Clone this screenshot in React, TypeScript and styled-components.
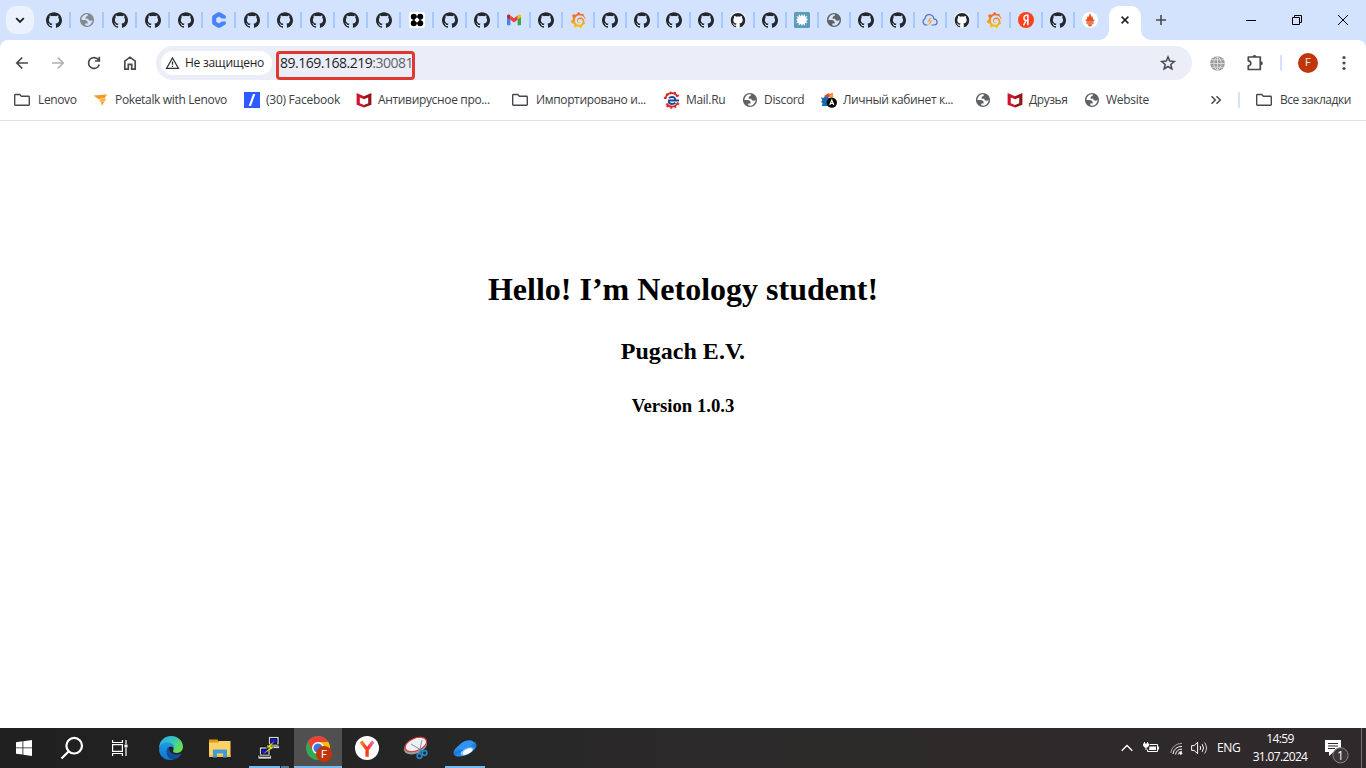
import React from "react";
import styled, { createGlobalStyle, css } from "styled-components";
import { SiGithub, SiGrafana } from "react-icons/si";

const GlobalStyle = createGlobalStyle`
  html, body { margin: 0; padding: 0; }
  body {
    width: 1366px; height: 768px; overflow: hidden; background: #fff;
    font-family: "Open Sans", "Noto Sans", sans-serif;
  }
  svg { display: block; flex: none; overflow: visible; }
`;

const Screen = styled.div`
  display: flex; flex-direction: column; width: 1366px; height: 768px;
`;

/* ---------- tab strip ---------- */
const TabStrip = styled.div`
  display: flex; align-items: center; height: 40px; background: #d3e2fd;
`;
const TabSearch = styled.div`
  display: flex; align-items: center; justify-content: center;
  width: 28px; height: 28px; margin: 0 3px 0 6px; border-radius: 10px; background: #ebf2fe;
`;
const Tab = styled.div<{ $w: number; $last?: boolean }>`
  box-sizing: border-box; display: flex; align-items: center; justify-content: center;
  width: ${p => p.$w}px; height: 16px; padding-left: ${p => (p.$w > 32 ? 1 : 0)}px;
  border-right: 2px solid ${p => (p.$last ? "transparent" : "#a8c7fa")};
`;
const ActiveTab = styled.div`
  position: relative; display: flex; align-items: center; justify-content: center;
  width: 32px; height: 34px; margin: 6px 0 0 2px; border-radius: 10px 10px 0 0; background: #fff;
  padding-bottom: 6px; box-sizing: border-box;
  &::before, &::after {
    content: ""; position: absolute; bottom: 0; width: 10px; height: 10px;
  }
  &::before { left: -10px; background: radial-gradient(circle at 0 0, transparent 9.5px, #fff 10.2px); }
  &::after { right: -10px; background: radial-gradient(circle at 100% 0, transparent 9.5px, #fff 10.2px); }
`;
const NewTab = styled.div`
  display: flex; width: 12px; margin-left: 14px;
`;
const WindowButtons = styled.div`
  display: flex; align-items: center; margin-left: auto;
`;
const WindowButton = styled.div`
  display: flex; align-items: center; justify-content: center; width: 46px; height: 40px;
`;

/* ---------- toolbar ---------- */
const ToolbarBack = styled.div`background: #d3e2fd;`;
const Toolbar = styled.div`
  display: flex; align-items: center; height: 46px; box-sizing: border-box;
  padding-left: 13px; background: #fff; border-radius: 8px 8px 0 0;
`;
const NavButton = styled.div`
  display: flex; width: 18px; margin-right: 18px;
`;
const Omnibox = styled.div`
  display: flex; align-items: center; width: 1036px; height: 34px; box-sizing: border-box;
  padding: 0 16px 0 5px; border-radius: 17px; background: #ebeef8; margin-left: -1px;
`;
const Chip = styled.div`
  display: flex; align-items: center; gap: 5px; width: 111px; height: 24px; box-sizing: border-box;
  padding-left: 4px; border-radius: 12px; background: #fff; color: #1f1f1f;
`;
const Address = styled.div`
  display: flex; align-items: center; box-sizing: border-box; width: 139px; height: 29px;
  margin: 5px auto 0 4px; padding: 0 0 5px 1px; border: 3px solid #e2372f; border-radius: 4px; color: #1f1f1f;
`;
const Port = styled.span`color: #5f6368;`;
const Extensions = styled.div`
  display: flex; align-items: center; margin-left: 18px;
`;
const Puzzle = styled.div`margin-left: 20px;`;
const Menu = styled.div`margin-left: 24px;`;
const Divider = styled.div<{ $gap: string }>`
  width: 2px; height: 16px; margin: ${p => p.$gap}; background: #d3e2fd; border-radius: 1px;
`;
const Avatar = styled.div`
  display: flex; align-items: center; justify-content: center; width: 20px; height: 20px;
  border-radius: 50%; background: #bf360c; color: #fbe3da; font: 11px/20px Roboto, sans-serif;
`;

/* ---------- bookmarks ---------- */
const Bookmarks = styled.div`
  display: flex; align-items: center; height: 34px; padding-left: 14px;
  border-bottom: 1px solid #dfe1e5; background: #fff; color: #3c4043;
`;
const Bookmark = styled.div<{ $w: number; $gap: number }>`
  display: flex; align-items: center; gap: ${p => p.$gap}px; width: ${p => p.$w}px; height: 28px;
  margin-bottom: 6px; flex: none;
`;
const Text = styled.span<{ $size?: number; $ls?: number; $weight?: number }>`
  flex: none; white-space: pre; font-size: ${p => p.$size ?? 12}px; line-height: 16px;
  font-weight: ${p => p.$weight ?? 400}; letter-spacing: ${p => p.$ls ?? 0}px;
`;

/* ---------- page ---------- */
const Page = styled.main`
  flex: 1; padding-top: 150px; background: #fff; color: #000; text-align: center;
  font-family: "Liberation Serif", "Times New Roman", serif;
`;
const H1 = styled.h1`margin: 0 0 31px; font-size: 32px; line-height: 36px;`;
const H2 = styled.h2`margin: 0 0 30px; font-size: 24px; line-height: 27px;`;
const H3 = styled.h3`margin: 0; font-size: 18.72px; line-height: 21px;`;

/* ---------- taskbar ---------- */
const Taskbar = styled.footer`
  display: flex; height: 40px; color: #fff;
  background: linear-gradient(90deg, #202020 0, #222 260px, #292828 520px, #2d2a2a 900px, #2f292b 1366px);
`;
const TaskButton = styled.div<{ $active?: boolean; $line?: number; $gap?: number }>`
  position: relative; display: flex; align-items: center; justify-content: center;
  width: 48px; height: 40px; margin-right: ${p => p.$gap ?? 1}px;
  background: ${p => (p.$active ? "#505050" : "transparent")};
  ${p => p.$line && css`
    &::after {
      content: ""; position: absolute; bottom: 0; left: ${(48 - p.$line) / 2}px;
      width: ${p.$line}px; height: 2px; background: #76b9ed;
    }
  `}
`;
const StackedLine = styled.div`
  position: absolute; left: 35px; bottom: 0; z-index: 1; width: 8px; height: 2px;
  background: #54799a; border-left: 1px solid #222;
`;
const Tray = styled.div`
  display: flex; align-items: center; margin-left: auto;
`;
const TrayItem = styled.div<{ $w: number }>`
  display: flex; align-items: center; justify-content: flex-start; width: ${p => p.$w}px; height: 40px;
`;
const Clock = styled.div`
  display: flex; flex-direction: column; align-items: center; gap: 2px; width: 56px; margin-right: 17px;
`;
const ShowDesktop = styled.div`
  width: 4px; height: 40px; border-left: 1px solid #777374;
`;

/* ---------- drawings ---------- */
const GitHub = ({ white }: { white?: boolean }) => (
  <svg width="16" height="16" viewBox="0 0 16 16">
    {white && <circle cx="8" cy="8" r="8" fill="#fff" />}
    <SiGithub size={white ? 14.6 : 16} x={white ? 0.7 : 0} y={white ? 0.9 : 0} color="#24292f" />
  </svg>
);
const Globe = ({ color = "#5f6368" }) => (
  <svg width="16" height="16" viewBox="0.6 0.6 22.8 22.8">
    <path fill={color} fillRule="evenodd" d="M12 2C6.480 2 2 6.480 2 12s4.480 10 10 10 10-4.480 10-10S17.520 2 12 2zM4 12h4.400c3.407.022 4.922 1.730 4.543 5.127H9.488v2.470a8.004 8.004 0 0 0 10.498-8.080C19.327 12.510 18.332 13 17 13c-2.137 0-3.206-.916-3.206-2.750h-3.748c-.274-2.728.683-4.092 2.870-4.092 0-.975.327-1.597.811-1.970A8.004 8.004 0 0 0 4 12z" />
  </svg>
);
const Grafana = () => (
  <svg width="16" height="16" viewBox="0 0 16 16">
    <defs>
      <linearGradient id="graf" x1="0" y1="0" x2="0" y2="24" gradientUnits="userSpaceOnUse">
        <stop offset="0" stopColor="#f05a28" /><stop offset="1" stopColor="#fbca0a" />
      </linearGradient>
    </defs>
    <SiGrafana size={16} fill="url(#graf)" />
  </svg>
);
const HexC = () => (
  <svg width="16" height="16" viewBox="0 0 16 16">
    <path fill="#4b82fb" fillRule="evenodd" d="M7 .3h2l5 3q.9.6.9 1.500v1.700h-4.300L8.500 4.800h-1L5.200 6.200v3.600l2.300 1.400h1l2.100-1.600h4.300v1.600q0 .9-.9 1.500l-5 3H7l-5-3q-.9-.6-.9-1.500V4.800q0-.9.900-1.500z" />
  </svg>
);
const Blocks = () => (
  <svg width="16" height="16" viewBox="0 0 16 16">
    <rect width="16" height="16" rx="2" fill="#fff" />
    <circle cx="4.800" cy="4.800" r="3" /><circle cx="11.200" cy="4.800" r="3" />
    <circle cx="4.800" cy="11.200" r="3" /><circle cx="11.200" cy="11.200" r="3" />
    <path d="M4.500 4.500h7v7h-7z" /><path fill="#fff" d="M8 5.300L10.700 8 8 10.700 5.300 8z" />
  </svg>
);
const Gmail = () => (
  <svg width="16" height="16" viewBox="0 0 16 16">
    <path fill="#4285f4" d="M1 4v8.300c0 .6.400 1 1 1h2.400V7.200z" />
    <path fill="#34a853" d="M11.600 7.200v6.100H14c.6 0 1-.4 1-1V4z" />
    <path fill="#fbbc04" d="M11.600 3.600v4L15 5.200V4c0-1.500-1.600-2-2.600-1.200z" />
    <path fill="#c5221f" d="M1 4v1.200l3.400 2.500V3.400l-.8-.6C2.600 2 1 2.600 1 4z" />
    <path fill="#ea4335" d="M4.400 7.700V3.500L8 6.200l3.600-2.700v4.200L8 10.400z" />
  </svg>
);
const Burst = () => (
  <svg width="16" height="16" viewBox="0 0 16 16">
    <rect width="16" height="16" rx="1.500" fill="#5a9cb8" />
    <path fill="#fff" d="M4.700 1.800l1.900 2.400L8 2.200l1.100 2 2-2.400-.1 2.900 2.600-.7-1.500 2.300 2 1.300-2 1.300 1.500 2.400-2.700-.5.100 2.900-2-2L8 14l-1.200-2.300-2.300 1.700.4-2.700-2.900.5 1.700-2.300L2 7.800l1.900-1.200-1.700-2.400 2.700.6z" />
  </svg>
);
const CloudBolt = () => (
  <svg width="16" height="16" viewBox="0 0 16 16" fill="none" strokeWidth="1.200">
    <path stroke="#5871c0" d="M5.500 13H4.200A3.300 3.300 0 013 6.700C3.400 3.900 5.500 2.500 7.500 2.700c2.400.2 4 1.800 4.400 4.200 2.100.3 3.200 1.600 3.200 3.100 0 1.800-1.300 3-3 3H9.500" />
    <path stroke="#f0a33c" d="M8.800 5.800L6.300 9h2.800L6.800 12.800" />
  </svg>
);
const Yandex = () => (
  <svg width="16" height="16" viewBox="0 0 16 16">
    <circle cx="8" cy="8" r="8" fill="#fc3f1d" />
    <path fill="none" stroke="#fff" strokeWidth="1.500" d="M9.900 13.300V3.300H8.700C6.900 3.300 6 4.400 6 5.900S7 8.500 8.700 8.500h1.200M8.100 8.500l-2.600 4.800" />
  </svg>
);
const Prometheus = () => (
  <svg width="16" height="16" viewBox="0 0 16 16">
    <circle cx="8" cy="8" r="8" fill="#fff" />
    <path fill="#e75225" d="M8 1c.3 1.300 1.300 2.400 1.300 4 .5-.3.700-.8.700-1.300.6 1.300 1.300 2.700 1.100 4.100l1.500-.5c-.1 1-.6 1.900-1.300 2.400H4.700C4 9.200 3.500 8.300 3.400 7.300l1.500.5C4.700 6.400 5.400 5 6 3.700c0 .5.200 1 .7 1.300C6.700 3.400 7.700 2.300 8 1zM4.400 10.200h7.200v1.600H4.400zM5.500 12.200h5c-.3 1.300-1.300 2.200-2.500 2.200s-2.200-.9-2.500-2.200z" />
  </svg>
);
const tabIcons: Record<string, React.ReactNode> = {
  g: <GitHub />, w: <GitHub white />, o: <Globe color="#86898c" />, O: <Globe />,
  c: <HexC />, b: <Blocks />, m: <Gmail />, f: <Grafana />, s: <Burst />, l: <CloudBolt />, y: <Yandex />, p: <Prometheus />,
};
const tabs = "gogggcgggggbggmgfggggwgsOgglwfygp".split("");

const Folder = () => (
  <svg width="16" height="16" viewBox="0 0 16 16" fill="none" stroke="#47494d" strokeWidth="1.400">
    <path d="M.7 3.200q0-.7.700-.7h4.300l1.700 1.700h7.200q.7 0 .7.700v7.700q0 .7-.7.700H1.400q-.7 0-.7-.7z" />
  </svg>
);
const Poketalk = () => (
  <svg width="16" height="16" viewBox="0 0 16 16">
    <path fill="#f8991d" d="M.8 3.600L14 2.500l-2.300 3.800-6.500.7C3.400 6 2 5 .8 3.600z" />
    <path fill="#fbb040" d="M5.800 7.400l7.500-1-1.800 3-3.800.6z" />
    <path fill="#f8991d" d="M7.900 10.300l3.300-.6-2.200 4z" />
  </svg>
);
const SlashIcon = () => (
  <svg width="16" height="16" viewBox="0 0 16 16">
    <path fill="#2e5bff" d="M0 0h16v16H0z" /><path fill="#fff" d="M9 2h2.300L7 14H4.700z" />
  </svg>
);
const McAfee = () => (
  <svg width="16" height="16" viewBox="0 0 16 16">
    <path fill="#d0142c" d="M.6 1L8 4.300v3L3.800 5.500v5.700L8 13v2.600L.6 12.700z" />
    <path fill="#94161c" d="M15.400 1L8 4.300v3l4.200-1.800v5.700L8 13v2.600l7.400-2.900z" />
  </svg>
);
const MailGear = () => (
  <svg width="16" height="16" viewBox="0 0 16 16" fill="none">
    <path stroke="#e32322" strokeWidth="1.800" d="M1.600 6.500A6.200 6.200 0 0113.500 5M13.800 10.500A6.300 6.300 0 012.400 11.500" />
    <path stroke="#e32322" strokeWidth="2.400" strokeDasharray="1.800 2.200" d="M1 7A7 7 0 0114.200 4.500M14.400 11A7 7 0 011.800 12" />
    <path stroke="#164a94" strokeWidth="2" d="M4 8.500h7.300C11.600 6.200 10 4.900 8 4.900c-1.300 0-2.300.5-3 1.300M15 8.500H12M4.600 9.500c.5 1.900 1.800 2.500 3.400 2.500 1.500 0 2.500-.4 3.400-1.200" />
  </svg>
);
const Cabinet = () => (
  <svg width="16" height="16" viewBox="0 0 16 16">
    <path fill="#ef4130" d="M3 4L8 .8l-.5 1.500L12 1l-1 3.500-7 1z" /><path fill="#f9a51a" d="M8 3l4-1.500.5 3.500-3 1z" />
    <path fill="#1769b5" d="M0 5l2 1 3-1.500L9 6v8H1l.5-3L0 10l1.300-1.500z" />
    <circle cx="10.800" cy="10.600" r="5.200" fill="#0a0a0a" />
    <path fill="none" stroke="#fff" strokeWidth="1.200" d="M8.800 13l2-5 2 5M9.800 11.500h2.200" />
  </svg>
);

const Chrome = () => (
  <svg width="24" height="24" viewBox="0 0 24 24">
    <circle cx="12" cy="12" r="12" fill="#34a853" />
    <path fill="#ea4335" d="M1.600 6A12 12 0 0122.400 6H12L6.800 15z" />
    <path fill="#fbbc04" d="M12 6h10.400A12 12 0 0112 24l5.200-9z" />
    <circle cx="12" cy="12" r="6" fill="#fff" /><circle cx="12" cy="12" r="4.600" fill="#3b78e7" />
    <circle cx="18" cy="18" r="8" fill="#bf360c" />
    <text x="18" y="22" fontSize="11" fill="#fff" textAnchor="middle" fontFamily="Roboto, sans-serif">F</text>
  </svg>
);
const Edge = () => (
  <svg width="24" height="24" viewBox="0 0 24 24">
    <defs>
      <linearGradient id="e1" x1="0" y1="0" x2="1" y2=".6"><stop offset="0" stopColor="#2aa7e8" /><stop offset=".5" stopColor="#34c4c0" /><stop offset="1" stopColor="#6be04b" /></linearGradient>
      <linearGradient id="e2" x1="0" y1="0" x2="0" y2="1"><stop offset="0" stopColor="#1b9de2" /><stop offset="1" stopColor="#1273cf" /></linearGradient>
    </defs>
    <path fill="url(#e1)" d="M.3 9.800C1.300 4 6 0 12 0c7 0 12 5 12 10.800 0 3.700-2.700 6.200-6.200 6.200-2.600 0-4-1-3.700-2 1-1.500 1-6.300-5.100-6.700C5 8 2 9.500.3 12z" />
    <path fill="url(#e2)" d="M.2 12.500C.6 8.500 4 6.200 8 6.200c4.600 0 7.500 2.700 7.200 6-4-3.400-8 0-7.400 4.300.5 3.700 3.500 7 7.200 7C6.500 25.800-.6 20.300.2 12.500z" />
    <path fill="#0d4f9e" d="M9.700 10.500c-3.700 3.500-2 10.800 5 13 3-.6 5.800-2.500 7.500-5.300.3-.5-.2-.8-.6-.6C16 20 9.500 17.500 9.700 10.500z" />
  </svg>
);
const Explorer = () => (
  <svg width="22" height="20" viewBox="0 0 22 20">
    <path fill="#e09a10" d="M0 1.500h8.500L10 4v3H0z" /><path fill="#fdd264" d="M0 4.500h9l1-1.500h11.500v16H0z" />
    <path fill="#f4bd3c" d="M0 17h21.500v2H0z" /><path fill="#3e9bdc" d="M4 11.500h14V19.500h-4v-4H8v4H4z" />
  </svg>
);
const Putty = () => (
  <svg width="22" height="24" viewBox="0 0 22 24">
    <path fill="#d4d4d4" stroke="#000" strokeWidth=".6" d="M10.500.5h10.500v9.500H10.500zM9 8.500h12.500v4H9zM1.500 11h10.500v9.500H1.500zM0 19h13.500v4H0z" />
    <path fill="#1414d8" stroke="#000" strokeWidth=".8" d="M12.500 2.500h6.500v5h-6.500zM3.500 13H10v5H3.500z" />
    <path fill="#f5ef15" stroke="#333" strokeWidth=".4" d="M16.500 5l-8 6 3.500.7-7.500 6.800 11.500-7-3.500-1z" />
  </svg>
);
const YBrowser = () => (
  <svg width="24" height="24" viewBox="0 0 24 24">
    <defs><linearGradient id="yb" x1="6" y1="0" x2="19" y2="0" gradientUnits="userSpaceOnUse"><stop offset="0" stopColor="#fb8a1c" /><stop offset=".4" stopColor="#fb3a1c" /><stop offset=".6" stopColor="#f9402c" /><stop offset="1" stopColor="#f07ad0" /></linearGradient></defs>
    <circle cx="12" cy="12" r="12" fill="#fff" />
    <path fill="none" stroke="url(#yb)" strokeWidth="3.400" d="M6 5.500l4.700 6.300q1.300 1.600 2.700 0L18.300 5.500M12.100 12v8.800" />
  </svg>
);
const Snip = () => (
  <svg width="24" height="24" viewBox="0 0 24 24">
    <ellipse cx="11.500" cy="10.500" rx="12" ry="7" fill="#9c9fa3" transform="rotate(-22 11.500 10.500)" />
    <ellipse cx="11.800" cy="8.500" rx="11.300" ry="6.300" fill="#eef0f3" stroke="#d9363a" strokeWidth="1.100" transform="rotate(-22 11.800 8.500)" />
    <path stroke="#8b9299" strokeWidth="1" fill="none" d="M7 8l10 6M18 4l-2 9" />
    <g fill="none" stroke="#2588c8" strokeWidth="1.700"><circle cx="15.500" cy="20" r="2.300" /><circle cx="20.500" cy="17" r="2.300" /><path d="M15.500 17.500l1.500-3.500 2 1.500" /></g>
  </svg>
);
const Saucer = () => (
  <svg width="24" height="24" viewBox="0 0 24 24">
    <defs><linearGradient id="sc" x1="0" y1="0" x2="0" y2="1"><stop offset="0" stopColor="#3c9ff5" /><stop offset=".5" stopColor="#1877e0" /><stop offset="1" stopColor="#3b9cf8" /></linearGradient></defs>
    <ellipse cx="12" cy="13" rx="12.300" ry="6" fill="url(#sc)" transform="rotate(-25 12 13)" />
    <ellipse cx="13" cy="9" rx="8" ry="4" fill="#2f93f3" transform="rotate(-22 13 9)" />
    <ellipse cx="14" cy="15.300" rx="7" ry="3" fill="#8cc8ff" transform="rotate(-26 14 15.300)" />
    <ellipse cx="14.500" cy="15.500" rx="5" ry="2.200" fill="#fff" transform="rotate(-26 14.500 15.500)" />
  </svg>
);

const line = { fill: "none", stroke: "#474a4d", strokeWidth: 1.700 };

export default function App() {
  return (
    <Screen>
      <GlobalStyle />
      <TabStrip>
        <TabSearch>
          <svg width="10" height="10" viewBox="0 0 10 10" fill="none" stroke="#1f1f1f" strokeWidth="1.800"><path d="M1.200 3.200L5 7l3.800-3.800" /></svg>
        </TabSearch>
        {tabs.map((t, i) => (
          <Tab key={i} $w={i === 0 ? 34 : i < 13 ? 33 : 32} $last={i === tabs.length - 1}>{tabIcons[t]}</Tab>
        ))}
        <ActiveTab>
          <svg width="8" height="8" viewBox="0 0 8 8" stroke="#1f1f1f" strokeWidth="1.500"><path d="M.6.6l6.800 6.800M7.400.6L.6 7.400" /></svg>
        </ActiveTab>
        <NewTab>
          <svg width="12" height="12" viewBox="0 0 12 12" stroke="#474a4d" strokeWidth="1.600"><path d="M6 1v10M1 6h10" /></svg>
        </NewTab>
        <WindowButtons>
          <WindowButton><svg width="10" height="12" viewBox="0 0 10 12" stroke="#000"><path d="M0 6.500h10" /></svg></WindowButton>
          <WindowButton><svg width="10" height="10" viewBox="0 0 10 10" stroke="#000" fill="none"><path d="M.5 2.500h7v7h-7zM2.500 2.500v-2h7v7h-2" /></svg></WindowButton>
          <WindowButton><svg width="10" height="10" viewBox="0 0 10 10" stroke="#000"><path d="M0 0l10 10M10 0L0 10" /></svg></WindowButton>
        </WindowButtons>
      </TabStrip>

      <ToolbarBack>
        <Toolbar>
          <NavButton><svg width="18" height="18" viewBox="0 0 18 18" {...line}><path d="M15 9H4M9.300 3.500L3.800 9l5.500 5.500" /></svg></NavButton>
          <NavButton><svg width="18" height="18" viewBox="0 0 18 18" {...line} stroke="#aeb0b3"><path d="M3 9h11M8.700 3.500L14.200 9l-5.500 5.500" /></svg></NavButton>
          <NavButton><svg width="18" height="18" viewBox="0 0 18 18" {...line}><path d="M14.200 10.500A5.400 5.400 0 119.100 3.600c2 0 3.600 1 4.700 2.600M14.300 2.800V7H10" /></svg></NavButton>
          <NavButton><svg width="18" height="18" viewBox="0 0 18 18" {...line}><path d="M3.800 7.200L9 3.200l5.200 4v7.900h-3.500v-4.700H7.300v4.700H3.800z" /></svg></NavButton>
          <Omnibox>
            <Chip>
              <svg width="15" height="16" viewBox="0 0 15 16" fill="none" stroke="#303236" strokeWidth="1.300"><path d="M7.500 3L1.600 13.300h11.800z" /><path d="M7.500 6.500v3.300M7.500 10.700v1.300" /></svg>
              <Text $weight={500} $ls={-0.26}>Не защищено</Text>
            </Chip>
            <Address><Text $size={14} $ls={-0.49}>89.169.168.219<Port>:30081</Port></Text></Address>
            <svg width="16" height="16" viewBox="0 0 16 16" {...line} strokeWidth="1.500"><path d="M8 1.900l1.700 4.200 4.600.4-3.500 3 1.100 4.400L8 11.500l-3.900 2.400 1.100-4.400-3.500-3 4.600-.4z" /></svg>
          </Omnibox>
          <Extensions>
            <svg width="15" height="15" viewBox="0 0 16 16"><circle cx="8" cy="8" r="7.800" fill="#9b9b9b" /><path fill="none" stroke="#e3e3e3" strokeWidth=".9" d="M8 0v16M0 8h16M1.500 4h13M1.500 12h13M8 .3C2.800 4 2.800 12 8 15.700M8 .3c5.200 3.700 5.200 11.700 0 15.400" /></svg>
            <Puzzle><svg width="20" height="20" viewBox="0 0 20 20" {...line}><path d="M3.300 4h12v12.500h-12v-3.700c3.300 0 3.300-5 0-5z" strokeLinejoin="round" /><path fill="#474a4d" stroke="none" d="M7.500 4a2 2 0 014 0zM15.800 8.300a2 2 0 010 4z" /></svg></Puzzle>
            <Divider $gap="0 16px 0 15px" />
            <Avatar>F</Avatar>
            <Menu><svg width="4" height="16" viewBox="0 0 4 16" fill="#474a4d"><circle cx="2" cy="2.500" r="1.600" /><circle cx="2" cy="8" r="1.600" /><circle cx="2" cy="13.500" r="1.600" /></svg></Menu>
          </Extensions>
        </Toolbar>
      </ToolbarBack>

      <Bookmarks>
        <Bookmark $w={79} $gap={8}><Folder /><Text $ls={-0.38}>Lenovo</Text></Bookmark>
        <Bookmark $w={151} $gap={6}><Poketalk /><Text $ls={-0.34}>Poketalk with Lenovo</Text></Bookmark>
        <Bookmark $w={112} $gap={6}><SlashIcon /><Text $ls={-0.26}>(30) Facebook</Text></Bookmark>
        <Bookmark $w={156} $gap={6}><McAfee /><Text $ls={-0.34}>Антивирусное про...</Text></Bookmark>
        <Bookmark $w={152} $gap={8}><Folder /><Text $ls={-0.36}>Импортировано и...</Text></Bookmark>
        <Bookmark $w={78} $gap={6}><MailGear /><Text $ls={-0.3}>Mail.Ru</Text></Bookmark>
        <Bookmark $w={79} $gap={6}><Globe /><Text $ls={-0.33}>Discord</Text></Bookmark>
        <Bookmark $w={154} $gap={6}><Cabinet /><Text $ls={-0.38}>Личный кабинет к...</Text></Bookmark>
        <Bookmark $w={32} $gap={6}><Globe /></Bookmark>
        <Bookmark $w={77} $gap={6}><McAfee /><Text $ls={-0.45}>Друзья</Text></Bookmark>
        <Bookmark $w={126} $gap={6}><Globe /><Text $ls={-0.3}>Website</Text></Bookmark>
        <Bookmark $w={28} $gap={0}><svg width="12" height="10" viewBox="0 0 12 10" {...line} strokeWidth="1.500"><path d="M1.500 1.200L5.300 5 1.500 8.800M6.500 1.200L10.300 5 6.500 8.800" /></svg></Bookmark>
        <Bookmark $w={18} $gap={0}><Divider $gap="0" /></Bookmark>
        <Bookmark $w={100} $gap={8}><Folder /><Text $ls={-0.44}>Все закладки</Text></Bookmark>
      </Bookmarks>

      <Page>
        <H1>Hello! I’m Netology student!</H1>
        <H2>Pugach E.V.</H2>
        <H3>Version 1.0.3</H3>
      </Page>

      <Taskbar>
        <TaskButton $gap={0}><svg width="16" height="16" viewBox="0 0 16 16" fill="#fff"><path d="M0 2.300L6.500 1.300v6.200H0zM7.300 1.200L16 0v7.500H7.300zM0 8.300h6.500v6.300L0 13.700zM7.300 8.300H16V16l-8.700-1.200z" /></svg></TaskButton>
        <TaskButton $gap={0}><svg width="24" height="24" viewBox="0 0 24 24" fill="none" stroke="#fff" strokeWidth="2.200"><circle cx="14.200" cy="9.700" r="7.800" /><path d="M8.800 15.200L1.500 22.500" /></svg></TaskButton>
        <TaskButton $gap={3}><svg width="16" height="16" viewBox="0 0 16 16" fill="none" stroke="#fff" strokeWidth="1.200"><path d="M.6 0v2.500h9.800V0M.6 16v-2.500h9.800V16M.6 4.600h9.800v6.800H.6zM14 0v4M14 8v8" /><path fill="#fff" stroke="none" d="M12.500 4.500h3v3h-3z" /></svg></TaskButton>
        <TaskButton><Edge /></TaskButton>
        <TaskButton><Explorer /></TaskButton>
        <TaskButton $line={40}><Putty /><StackedLine /></TaskButton>
        <TaskButton $active $line={48}><Chrome /></TaskButton>
        <TaskButton><YBrowser /></TaskButton>
        <TaskButton><Snip /></TaskButton>
        <TaskButton $line={40}><Saucer /></TaskButton>
        <Tray>
          <TrayItem $w={22}><svg width="12" height="8" viewBox="0 0 12 8" fill="none" stroke="#fff" strokeWidth="1.300"><path d="M.7 6.800L6 1.500l5.300 5.300" /></svg></TrayItem>
          <TrayItem $w={27}><svg width="16" height="12" viewBox="0 0 16 12" fill="none" stroke="#fff"><path d="M6.500 2.500h8v7h-10V7.500M15.500 4.500v3M1.500 0v2M4.500 0v2M3 5v3" /><path fill="#fff" stroke="none" d="M0 1.500h6v2L4.500 5.500h-3L0 3.500zM6.500 4.500h6.500v3.500H6z" /></svg></TrayItem>
          <TrayItem $w={21}><svg width="13" height="13" viewBox="0 0 13 13" fill="none" stroke="#fff"><path stroke="#aaa5a6" d="M.8 11A10.500 10.500 0 0112 1.500" /><path d="M3 12A8.200 8.200 0 0112 4.500M5.600 12.500A5.800 5.800 0 0112 7.200" /><circle cx="10.800" cy="11.300" r="1.400" fill="#fff" stroke="none" /><path d="M8.300 12.500A3.500 3.500 0 0112 9.300" strokeWidth=".8" /></svg></TrayItem>
          <TrayItem $w={26}><svg width="17" height="14" viewBox="0 0 17 14" fill="none" stroke="#fff"><path d="M.6 4.600h2.500L6.600 1.300v11.400L3.100 9.400H.6zM9 5q1.300 2 0 4M11.200 3.200q2.600 3.800 0 7.600" /><path stroke="#d2cfcf" d="M13.600 1.500q3.800 5.500 0 11" /></svg></TrayItem>
          <TrayItem $w={35}><Text $ls={-0.3}>ENG</Text></TrayItem>
          <Clock><Text $ls={-0.6}>14:59</Text><Text $ls={-0.65}>31.07.2024</Text></Clock>
          <TrayItem $w={36}>
            <svg width="26" height="28" viewBox="0 0 26 28">
              <path fill="#fff" d="M0 6h16v12H8.500L4 22v-4H0z" /><path stroke="#2f292b" d="M3 9.500h10M3 12h10M3 14.500h7" />
              <circle cx="15.500" cy="21.300" r="7.600" fill="#3c3739" stroke="#8b8788" />
              <text x="15.500" y="25.600" fontSize="12" fill="#fff" textAnchor="middle" fontFamily="Open Sans, sans-serif">1</text>
            </svg>
          </TrayItem>
          <ShowDesktop />
        </Tray>
      </Taskbar>
    </Screen>
  );
}
